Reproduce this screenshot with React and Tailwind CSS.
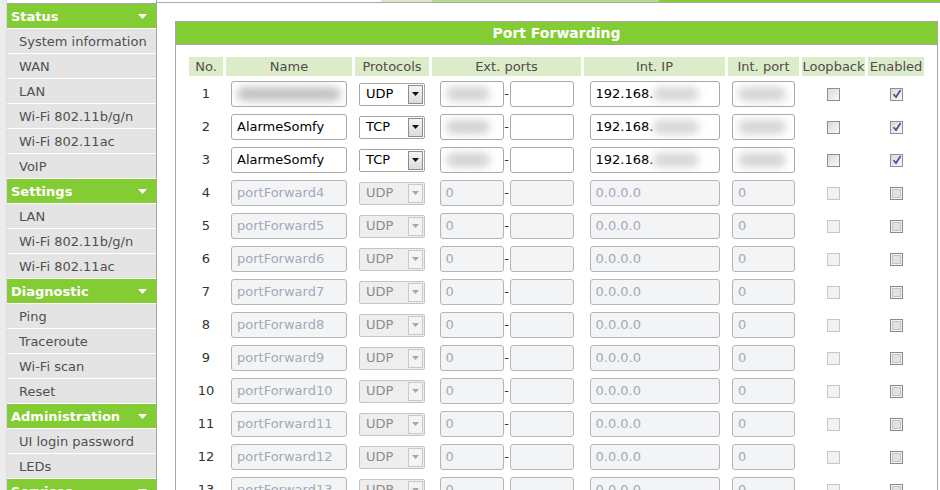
import React from "react";

const menu = [
  { title: "Status", items: ["System information", "WAN", "LAN", "Wi-Fi 802.11b/g/n", "Wi-Fi 802.11ac", "VoIP"] },
  { title: "Settings", items: ["LAN", "Wi-Fi 802.11b/g/n", "Wi-Fi 802.11ac"] },
  { title: "Diagnostic", items: ["Ping", "Traceroute", "Wi-Fi scan", "Reset"] },
  { title: "Administration", items: ["UI login password", "LEDs"] },
  { title: "Services", items: ["DynDNS"] },
];

const headers = ["No.", "Name", "Protocols", "Ext. ports", "Int. IP", "Int. port", "Loopback", "Enabled"];

const rows = [
  { no: 1, name: null, proto: "UDP", active: true },
  { no: 2, name: "AlarmeSomfy", proto: "TCP", active: true },
  { no: 3, name: "AlarmeSomfy", proto: "TCP", active: true },
  ...Array.from({ length: 11 }, (_, i) => ({ no: i + 4, name: `portForward${i + 4}`, proto: "UDP", active: false })),
];

const GRID = "grid grid-cols-[34px_126px_74px_149px_141px_71px_63px_56px] gap-x-[3px]";

function Blob({ className }) {
  // privacy blur over the real values
  return <span className={`block rounded-full blur-[4px] ${className}`} />;
}

function Field({ active, className, children }) {
  return (
    <div
      className={
        active
          ? `flex h-[26px] items-center overflow-hidden rounded-[3px] border border-[#a9a9a9] bg-white px-[5px] text-[13px] text-black ${className}`
          : `flex h-[26px] items-center overflow-hidden rounded-[3px] border border-[#b5b5b5] bg-[#f3f4f6] px-[5px] text-[13px] text-[#a3a9b6] ${className}`
      }
    >
      {children}
    </div>
  );
}

function Select({ value, active }) {
  return (
    <div
      className={
        active
          ? "flex h-[23px] w-[66px] items-center justify-between rounded-[2px] border border-[#a5a5a5] bg-white pl-[6px] pr-px text-[13px] text-black"
          : "flex h-[23px] w-[66px] items-center justify-between rounded-[2px] border border-[#c4c4c4] bg-[#eeeeee] pl-[6px] pr-px text-[13px] text-[#8c8c8c]"
      }
    >
      <span>{value}</span>
      <span
        className={
          active
            ? "flex h-[19px] w-[15px] items-center justify-center border border-[#8d8d8d] bg-gradient-to-b from-[#f4f4f4] to-[#dcdcdc]"
            : "flex h-[19px] w-[15px] items-center justify-center border border-[#c9c9c9] bg-[#f4f4f4]"
        }
      >
        <svg width="7" height="4" viewBox="0 0 7 4">
          <path d="M0 0h7L3.5 4z" fill={active ? "#111" : "#a8a8a8"} />
        </svg>
      </span>
    </div>
  );
}

function Check({ kind }) {
  if (kind === "disabled") {
    return <div className="h-[13px] w-[13px] border border-[#c6c6c6] bg-[#f2f2f2]" />;
  }
  if (kind === "off-grey") {
    return (
      <div className="flex h-[13px] w-[13px] items-center justify-center border border-[#8a8a8a] bg-[#f2f2f2]">
        <div className="h-[9px] w-[9px] border border-[#c4c4c4] bg-[#e2e2e2]" />
      </div>
    );
  }
  return (
    <div className="relative h-[13px] w-[13px] border border-[#8f8f8f] bg-gradient-to-br from-[#d9d9d9] to-[#fafafa]">
      {kind === "on" && (
        <svg className="absolute left-[1px] top-[0px]" width="10" height="10" viewBox="0 0 10 10">
          <path d="M1.5 5.2 L4 8 L8.6 1" stroke="#3f51a3" strokeWidth="1.7" fill="none" />
        </svg>
      )}
    </div>
  );
}

export default function App() {
  return (
    <div className="flex h-[490px] w-[940px] overflow-hidden bg-white font-['DejaVu_Sans','Verdana',sans-serif]">
      {/* left gutter */}
      <div className="w-[7px] shrink-0 border-r border-[#dcdcdc] bg-[#ececec]" />

      {/* sidebar */}
      <div className="w-[150px] shrink-0 border-r border-[#a3a3a3]">
        <div className="h-[3px] bg-white" />
        <div className="h-px bg-[#a8a8a8]" />
        {menu.map((sec) => (
          <div key={sec.title}>
            <div className="flex h-[25px] items-center justify-between border-b border-white bg-[#84cc33] pl-[4px] pr-[9px] pt-px text-[13px] font-bold leading-[24px] text-white">
              <span>{sec.title}</span>
              <svg width="9" height="5" viewBox="0 0 9 5">
                <path d="M0 0h9L4.5 5z" fill="#fff" />
              </svg>
            </div>
            {sec.items.map((it) => (
              <div
                key={it}
                className="h-[25px] border-b border-white bg-[#e4e4e4] pl-[12px] pt-px text-[13px] leading-[23px] text-[#505050]"
              >
                {it}
              </div>
            ))}
          </div>
        ))}
      </div>

      {/* main */}
      <div className="flex-1">
        <div className="flex h-[2px]">
          <div className="w-[224px]" />
          <div className="w-[51px] bg-[#dcebc6]" />
          <div className="w-[227px] bg-[#b6d98c]" />
          <div className="flex-1 bg-[#84cc33]" />
        </div>
        <div className="h-px bg-[#a8a8a8]" />

        <div className="ml-[18px] mt-[18px] w-[763px] border border-[#a5a5a5]">
          <div className="h-[23px] border-b border-[#a5a5a5] bg-[#84cc33] text-center text-[14px] font-bold leading-[23px] text-white">
            Port Forwarding
          </div>

          <div className="pl-[13px] pt-[12px]">
            <div className={`${GRID} h-[19px]`}>
              {headers.map((h) => (
                <div key={h} className="bg-[#ddecc8] text-center text-[13px] leading-[19px] text-[#4d4d4d]">
                  {h}
                </div>
              ))}
            </div>

            <div className="mt-[3px] flex flex-col gap-y-[3px]">
              {rows.map((r) => (
                <div key={r.no} className={`${GRID} h-[30px] items-center`}>
                  <div className="text-center text-[13px] text-[#333]">{r.no}</div>

                  <div className="flex justify-center">
                    <Field active={r.active} className="w-[116px]">
                      {r.name ? r.name : <Blob className="h-[14px] w-[104px] bg-[#c2c2c2]" />}
                    </Field>
                  </div>

                  <div className="flex justify-center">
                    <Select value={r.proto} active={r.active} />
                  </div>

                  <div className="flex items-center justify-center">
                    <Field active={r.active} className="w-[64px]">
                      {r.active ? <Blob className="h-[14px] w-[44px] bg-[#d2d2d2]" /> : "0"}
                    </Field>
                    <span className="w-[6px] text-center text-[13px] text-[#333]">-</span>
                    <Field active={r.active} className="w-[64px]" />
                  </div>

                  <div className="flex justify-center">
                    <Field active={r.active} className="w-[130px]">
                      {r.active ? (
                        <>
                          <span>192.168.</span>
                          <Blob className="h-[14px] w-[46px] bg-[#d6d6d6]" />
                        </>
                      ) : (
                        "0.0.0.0"
                      )}
                    </Field>
                  </div>

                  <div className="flex justify-center">
                    <Field active={r.active} className="w-[63px]">
                      {r.active ? <Blob className="h-[14px] w-[48px] bg-[#d4d4d4]" /> : "0"}
                    </Field>
                  </div>

                  <div className="flex justify-center">
                    <Check kind={r.active ? "off" : "disabled"} />
                  </div>

                  <div className="flex justify-center">
                    <Check kind={r.active ? "on" : "off-grey"} />
                  </div>
                </div>
              ))}
            </div>
          </div>
        </div>
      </div>
    </div>
  );
}
